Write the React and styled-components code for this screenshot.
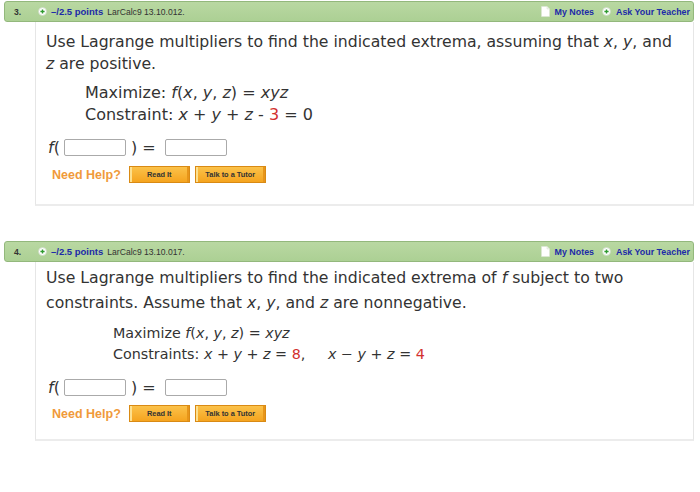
import React from "react"
import styled, { createGlobalStyle } from "styled-components"

const GlobalStyle = createGlobalStyle`
  html, body {
    margin: 0;
    padding: 0;
    background: #fff;
  }
  body {
    font-family: "DejaVu Sans", Verdana, sans-serif;
    color: #333;
  }
`

const Page = styled.div`
  width: 700px;
  padding: 1px 6px 0 4px;
  box-sizing: border-box;
  display: flex;
  flex-direction: column;
  gap: 35px;
`

const Question = styled.section`
  display: flex;
  flex-direction: column;
`

const Header = styled.header`
  height: 21px;
  box-sizing: border-box;
  display: flex;
  align-items: center;
  background: linear-gradient(#b9d8a2, #acd094);
  border: 1px solid #93b87c;
  border-radius: 3px;
  padding: 0 3px 0 9px;
  font-family: "Liberation Sans", Arial, sans-serif;
  font-size: 8.6px;
  color: #333;
`

const Number = styled.span`
  font-weight: bold;
  width: 24px;
`

const Points = styled.span`
  font-weight: bold;
  font-size: 9.5px;
  color: #1c2aa8;
  margin: 0 4px 0 4px;
`

const Spacer = styled.span`
  flex: 1;
`

const HeaderLink = styled.span`
  font-weight: bold;
  color: #1c2aa8;
  font-size: 8.9px;
  margin-left: 5px;
`

const PlusIcon = ({ gap }) => (
  <svg width="9" height="9" viewBox="0 0 9 9" style={{ marginLeft: gap }}>
    <circle cx="4.5" cy="4.5" r="4" fill="#fff" stroke="#c9d8c0" strokeWidth="0.8" />
    <path d="M4.5 2.4v4.2M2.4 4.5h4.2" stroke="#2f9a2f" strokeWidth="1.4" />
  </svg>
)

const NoteIcon = () => (
  <svg width="9" height="11" viewBox="0 0 9 11">
    <path d="M0.5 0.5h5.5l2.5 2.5v7.5h-8z" fill="#fff" stroke="#dde6d6" strokeWidth="0.6" />
    <path d="M6 0.5v2.5h2.5" fill="#eef2ea" stroke="#dde6d6" strokeWidth="0.6" />
  </svg>
)

const Body = styled.div`
  margin-left: 31px;
  border-left: 1px solid #e6e6e6;
  border-right: 1px solid #e6e6e6;
  border-bottom: 2px solid #ececec;
  padding: ${p => p.$pad};
`

const Prompt = styled.p`
  margin: 0;
  font-size: 15.7px;
  line-height: ${p => p.$lh}px;
  color: #333;
`

const Formula = styled.div`
  margin: ${p => p.$margin};
  padding-left: ${p => p.$indent}px;
  font-size: ${p => p.$size}px;
  line-height: ${p => p.$lh}px;
`

const Var = styled.i`
  font-style: italic;
`

const Red = styled.span`
  color: #d2302f;
`

const AnswerRow = styled.div`
  display: flex;
  align-items: center;
  margin: ${p => p.$margin};
  padding-left: 2px;
  font-size: 16px;
  height: 18px;
`

const AnswerBox = styled.span`
  display: inline-block;
  width: 60px;
  height: 15px;
  border: 1px solid #aaa;
  border-radius: 2px;
  background: #fff;
  margin: ${p => p.$margin};
`

const HelpRow = styled.div`
  display: flex;
  align-items: center;
  gap: 5px;
  margin-top: ${p => p.$top}px;
  padding-left: 6px;
  font-family: "Liberation Sans", Arial, sans-serif;
`

const HelpLabel = styled.span`
  color: #f09a3a;
  font-weight: bold;
  font-size: 12.5px;
  margin-right: 3px;
`

const HelpButton = styled.span`
  display: inline-flex;
  align-items: center;
  justify-content: center;
  width: ${p => p.$w}px;
  height: 17px;
  box-sizing: border-box;
  background: linear-gradient(#fbc24a, #f5a41f);
  border: 1px solid #d98a14;
  box-shadow: inset 2px 0 0 #fde08f, inset -2px 0 0 #e7951a;
  font-size: 7.4px;
  font-weight: bold;
  color: #333;
`

const QuestionHeader = ({ num, code }) => (
  <Header>
    <Number>{num}</Number>
    <PlusIcon gap="0" />
    <Points>–/2.5 points</Points>
    <span>{code}</span>
    <Spacer />
    <NoteIcon />
    <HeaderLink>My Notes</HeaderLink>
    <PlusIcon gap="8px" />
    <HeaderLink>Ask Your Teacher</HeaderLink>
  </Header>
)

const Help = ({ top }) => (
  <HelpRow $top={top}>
    <HelpLabel>Need Help?</HelpLabel>
    <HelpButton $w={61}>Read It</HelpButton>
    <HelpButton $w={71}>Talk to a Tutor</HelpButton>
  </HelpRow>
)

const Answer = ({ margin }) => (
  <AnswerRow $margin={margin}>
    <Var>f</Var>(
    <AnswerBox $margin="0 5px 0 4px" />
    )&nbsp;=
    <AnswerBox $margin="0 0 0 9px" />
  </AnswerRow>
)

const App = () => (
  <>
    <GlobalStyle />
    <Page>
      <Question>
        <QuestionHeader num="3." code="LarCalc9 13.10.012." />
        <Body $pad="9px 14px 21px 10px">
          <Prompt $lh={22}>
            Use Lagrange multipliers to find the indicated extrema, assuming that <Var>x</Var>, <Var>y</Var>, and <Var>z</Var> are positive.
          </Prompt>
          <Formula $margin="7px 0 0 0" $indent={39} $size={16} $lh={22}>
            <div>Maximize: <Var>f</Var>(<Var>x</Var>, <Var>y</Var>, <Var>z</Var>) = <Var>xyz</Var></div>
            <div>Constraint: <Var>x</Var> + <Var>y</Var> + <Var>z</Var> - <Red>3</Red> = 0</div>
          </Formula>
          <Answer margin="12px 0 0 0" />
          <Help top={10} />
        </Body>
      </Question>
      <Question>
        <QuestionHeader num="4." code="LarCalc9 13.10.017." />
        <Body $pad="3px 14px 17px 10px">
          <Prompt $lh={25}>
            Use Lagrange multipliers to find the indicated extrema of <Var>f</Var> subject to two constraints. Assume that <Var>x</Var>, <Var>y</Var>, and <Var>z</Var> are nonnegative.
          </Prompt>
          <Formula $margin="8px 0 0 0" $indent={67} $size={14.3} $lh={21}>
            <div>Maximize <Var>f</Var>(<Var>x</Var>, <Var>y</Var>, <Var>z</Var>) = <Var>xyz</Var></div>
            <div>Constraints: <Var>x</Var> + <Var>y</Var> + <Var>z</Var> = <Red>8</Red>,&nbsp;&nbsp;&nbsp;&nbsp; <Var>x</Var> − <Var>y</Var> + <Var>z</Var> = <Red>4</Red></div>
          </Formula>
          <Answer margin="13px 0 0 0" />
          <Help top={9} />
        </Body>
      </Question>
    </Page>
  </>
)

export default App
